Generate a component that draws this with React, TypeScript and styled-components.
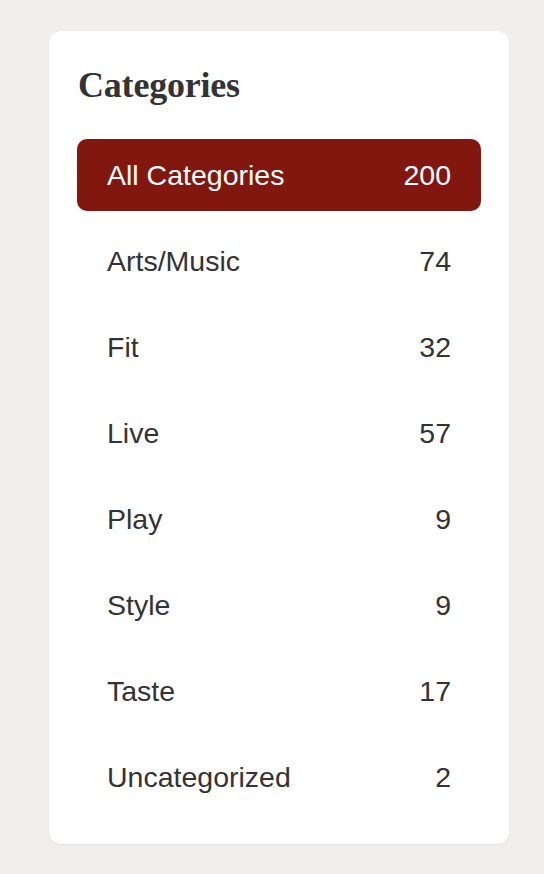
import styled, { createGlobalStyle } from 'styled-components';

const categories = [
   { name: 'All Categories', count: 200 },
   { name: 'Arts/Music', count: 74 },
   { name: 'Fit', count: 32 },
   { name: 'Live', count: 57 },
   { name: 'Play', count: 9 },
   { name: 'Style', count: 9 },
   { name: 'Taste', count: 17 },
   { name: 'Uncategorized', count: 2 },
];

const GlobalStyle = createGlobalStyle`
   html, body {
      margin: 0;
      background: #f0efed;
   }
   body {
      font-family: 'Liberation Sans', Arial, sans-serif;
      color: #333;
   }
`;

const Page = styled.div`
   padding: 31px 35px 30px 49px;
`;

const Card = styled.aside`
   width: 460px;
   box-sizing: border-box;
   padding: 28px 28px 31px;
   background: #fff;
   border-radius: 12px;
   box-shadow: 0 1px 2px rgba(0, 0, 0, 0.06);
`;

const Title = styled.h2`
   margin: 0 0 28px 1px;
   font-family: 'Liberation Serif', 'Times New Roman', serif;
   font-size: 36px;
   font-weight: 700;
   line-height: 52px;
   color: #333;
   letter-spacing: -0.2px;
`;

const List = styled.ul`
   list-style: none;
   margin: 0;
   padding: 0;
   display: flex;
   flex-direction: column;
   gap: 14px;
`;

const Row = styled.li<{ $active?: boolean }>`
   display: flex;
   align-items: center;
   justify-content: space-between;
   height: 72px;
   padding: 0 30px;
   border-radius: 10px;
   font-size: 28.5px;
   background: ${({ $active }) => ($active ? '#82170f' : 'transparent')};
   color: ${({ $active }) => ($active ? '#fff' : '#333')};
`;

const App = () => (
   <>
      <GlobalStyle />
      <Page>
         <Card>
            <Title>Categories</Title>
            <List>
               {categories.map((c, i) => (
                  <Row key={c.name} $active={i === 0}>
                     <span>{c.name}</span>
                     <span>{c.count}</span>
                  </Row>
               ))}
            </List>
         </Card>
      </Page>
   </>
);

export default App;
